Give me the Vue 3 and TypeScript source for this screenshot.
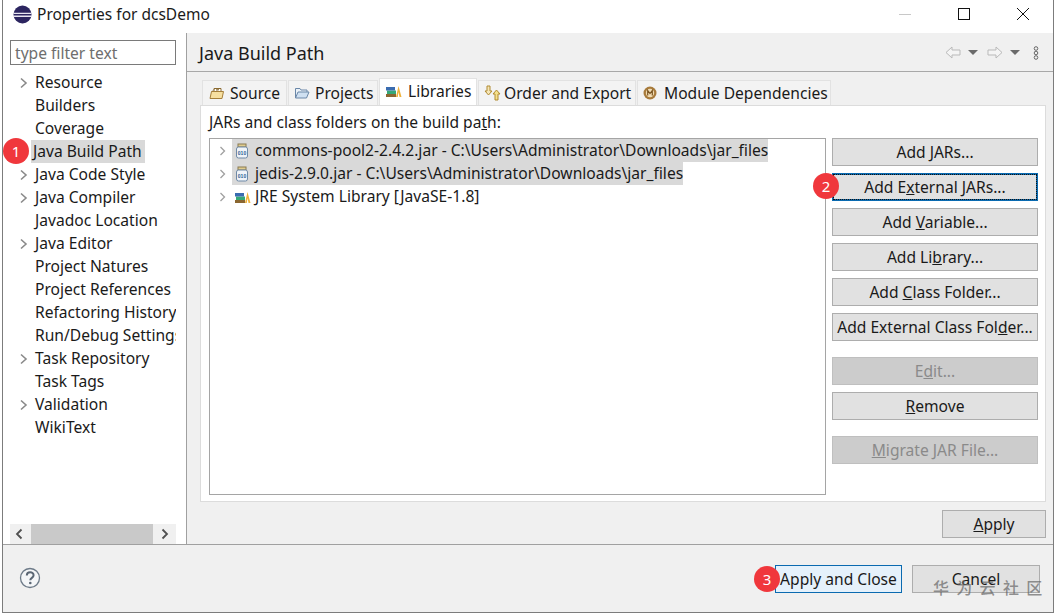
<script setup lang="ts">
interface TreeItem { label: string; arrow: boolean; selected?: boolean }
const tree: TreeItem[] = [
  { label: 'Resource', arrow: true },
  { label: 'Builders', arrow: false },
  { label: 'Coverage', arrow: false },
  { label: 'Java Build Path', arrow: false, selected: true },
  { label: 'Java Code Style', arrow: true },
  { label: 'Java Compiler', arrow: true },
  { label: 'Javadoc Location', arrow: false },
  { label: 'Java Editor', arrow: true },
  { label: 'Project Natures', arrow: false },
  { label: 'Project References', arrow: false },
  { label: 'Refactoring History', arrow: false },
  { label: 'Run/Debug Settings', arrow: false },
  { label: 'Task Repository', arrow: true },
  { label: 'Task Tags', arrow: false },
  { label: 'Validation', arrow: true },
  { label: 'WikiText', arrow: false }
]
</script>

<template>
  <div class="window">
    <header class="titlebar">
      <svg class="logo" width="19" height="19" viewBox="0 0 19 19">
        <circle cx="9.500" cy="9.500" r="9" fill="#2c2560" />
        <path d="M.8 7.800h17.400v1.300H.8zM.8 10.600h17.400v1.300H.8z" fill="#e9e6f2" />
      </svg>
      <span class="title">Properties for dcsDemo</span>
      <div class="winctl">
        <svg width="14" height="14" viewBox="0 0 14 14"><path d="M1 7.500h12" stroke="#c8c8c8" /></svg>
        <svg width="14" height="14" viewBox="0 0 14 14"><rect x="1.500" y="1.500" width="11" height="11" fill="none" stroke="#111" /></svg>
        <svg width="14" height="14" viewBox="0 0 14 14"><path d="M1 1l12 12M13 1L1 13" stroke="#111" /></svg>
      </div>
    </header>

    <div class="body">
      <aside class="side">
        <div class="filter">type filter text</div>
        <ul class="tree">
          <li v-for="t in tree" :key="t.label" class="node">
            <svg v-if="t.arrow" class="arrow" width="9" height="12" viewBox="0 0 9 12"><path d="M2 1.500L7 6l-5 4.500" fill="none" stroke="#8a8a8a" stroke-width="1.600" /></svg>
            <span v-else class="arrow" />
            <span class="nodelabel" :class="{ sel: t.selected }">{{ t.label }}</span>
          </li>
        </ul>
        <div class="hscroll">
          <svg width="8" height="12" viewBox="0 0 8 12"><path d="M6.500 1.500L2 6l4.500 4.500" fill="none" stroke="#505050" stroke-width="1.800" /></svg>
          <div class="thumb" />
          <svg width="8" height="12" viewBox="0 0 8 12"><path d="M1.500 1.500L6 6l-4.500 4.500" fill="none" stroke="#505050" stroke-width="1.800" /></svg>
        </div>
      </aside>

      <main class="main">
        <div class="mainhead">
          <h1 class="heading">Java Build Path</h1>
          <div class="nav">
            <svg width="16" height="13" viewBox="0 0 16 13"><path d="M7 1L1 6.500 7 12V9h8V4H7z" fill="#f4f4f4" stroke="#b9b9b9" /></svg>
            <i class="tri" />
            <svg width="16" height="13" viewBox="0 0 16 13"><path d="M9 1l6 5.500L9 12V9H1V4h8z" fill="#f4f4f4" stroke="#b9b9b9" /></svg>
            <i class="tri" />
            <svg class="dots" width="6" height="14" viewBox="0 0 6 14"><g fill="none" stroke="#666"><circle cx="3" cy="2.500" r="1.800" /><circle cx="3" cy="7" r="1.800" /><circle cx="3" cy="11.500" r="1.800" /></g></svg>
          </div>
        </div>

        <div class="tabsarea">
          <div class="tabs">
            <div class="tab t1">
              <svg width="16" height="14" viewBox="0 0 16 14"><path d="M5 5V2.500h7V5M7 3.800h3" fill="#fff" stroke="#8a6a30" /><path d="M1 12.500l1.500-7h12l-1.500 7z" fill="#f6dfa0" stroke="#a57f3a" /><path d="M3 5.500l3-3M7 5.500l3-3" stroke="#8a6a30" stroke-width=".6" /></svg>Source
            </div>
            <div class="tab t2">
              <svg width="16" height="14" viewBox="0 0 16 14"><path d="M1.500 12V2.500h4.500l1 1.500h6v2" fill="#eaf1f8" stroke="#6a87a8" /><path d="M1.500 12l2.500-6h11l-2.500 6z" fill="#cfe0f1" stroke="#6a87a8" /></svg>Projects
            </div>
            <div class="tab t3 active">
              <svg width="17" height="14" viewBox="0 0 17 14"><path d="M1 10h10v3H1z" fill="#8a6630" /><path d="M2 6.500h9V10H2z" fill="#35a877" /><path d="M1 3h9v3.500H1z" fill="#3a6cb0" /><path d="M11 13l2.500-11L16.500 13h-2l-1-5-.7 5z" fill="#eeb23a" /></svg>Libraries
            </div>
            <div class="tab t4">
              <svg width="18" height="16" viewBox="0 0 18 16"><path d="M4 1h3v5h2L5.500 10 2 6h2z" fill="#f5e6b8" stroke="#b08a30" /><path d="M12 15V9h-2l3.500-4L17 9h-2v6z" fill="#f5e08a" stroke="#b08a30" /></svg>Order and Export
            </div>
            <div class="tab t5">
              <svg width="14" height="14" viewBox="0 0 14 14"><circle cx="7" cy="7" r="6.500" fill="#a87b3c" /><circle cx="7" cy="7" r="4.200" fill="#f1dcb4" /><path d="M4.700 9.500v-5l2.300 3 2.300-3v5" fill="none" stroke="#7a5522" stroke-width="1.200" /></svg>Module Dependencies
            </div>
          </div>
          <section class="panel">
            <p class="lead">JARs and class folders on the build pa<u>t</u>h:</p>
            <div class="columns">
              <div class="list">
                <div class="row">
                  <svg class="arrow2" width="7" height="10" viewBox="0 0 7 10"><path d="M1.500 1L5.500 5l-4 4" fill="none" stroke="#a0a0a0" stroke-width="1.300" /></svg>
                  <span class="hl">
                    <svg class="ic" width="14" height="16" viewBox="0 0 14 16"><rect x="3" y="1" width="8" height="3" fill="#e0cc8e" stroke="#8a7a50" /><rect x="1.500" y="4" width="11" height="11" rx="2" fill="#f0f4f8" stroke="#6f8aa8" /><text x="7" y="11.500" font-size="5" font-weight="700" text-anchor="middle" fill="#2f5f96" font-family="Liberation Sans">010</text></svg>
                    <span class="rowtext">commons-pool2-2.4.2.jar - C:\Users\Administrator\Downloads\jar_files</span>
                  </span>
                </div>
                <div class="row">
                  <svg class="arrow2" width="7" height="10" viewBox="0 0 7 10"><path d="M1.500 1L5.500 5l-4 4" fill="none" stroke="#a0a0a0" stroke-width="1.300" /></svg>
                  <span class="hl">
                    <svg class="ic" width="14" height="16" viewBox="0 0 14 16"><rect x="3" y="1" width="8" height="3" fill="#e0cc8e" stroke="#8a7a50" /><rect x="1.500" y="4" width="11" height="11" rx="2" fill="#f0f4f8" stroke="#6f8aa8" /><text x="7" y="11.500" font-size="5" font-weight="700" text-anchor="middle" fill="#2f5f96" font-family="Liberation Sans">010</text></svg>
                    <span class="rowtext">jedis-2.9.0.jar - C:\Users\Administrator\Downloads\jar_files</span>
                  </span>
                </div>
                <div class="row">
                  <svg class="arrow2" width="7" height="10" viewBox="0 0 7 10"><path d="M1.500 1L5.500 5l-4 4" fill="none" stroke="#a0a0a0" stroke-width="1.300" /></svg>
                  <span class="hl plain">
                    <svg class="ic" width="17" height="14" viewBox="0 0 17 14"><path d="M1 10h10v3H1z" fill="#8a6630" /><path d="M2 6.500h9V10H2z" fill="#35a877" /><path d="M1 3h9v3.500H1z" fill="#3a6cb0" /><path d="M11 13l2.500-11L16.500 13h-2l-1-5-.7 5z" fill="#eeb23a" /></svg>
                    <span class="rowtext lib">JRE System Library [JavaSE-1.8]</span>
                  </span>
                </div>
              </div>
              <div class="btncol">
                <button class="btn">Add <u>J</u>ARs...</button>
                <button class="btn focus">Add E<u>x</u>ternal JARs...</button>
                <button class="btn">Add <u>V</u>ariable...</button>
                <button class="btn">Add Li<u>b</u>rary...</button>
                <button class="btn">Add <u>C</u>lass Folder...</button>
                <button class="btn">Add External Class Fol<u>d</u>er...</button>
                <button class="btn dis gap">E<u>d</u>it...</button>
                <button class="btn"><u>R</u>emove</button>
                <button class="btn dis gap"><u>M</u>igrate JAR File...</button>
              </div>
            </div>
          </section>
          <div class="applyrow"><button class="btn apply"><u>A</u>pply</button></div>
        </div>
      </main>
    </div>

    <footer class="footer">
      <svg class="help" width="22" height="22" viewBox="0 0 22 22"><circle cx="11" cy="11" r="9.500" fill="#f4f6f8" stroke="#6d7a88" stroke-width="1.300" /><path d="M7.800 8.500c0-4.300 6.800-4.300 6.800-.2 0 2.600-3.300 2.600-3.300 5" fill="none" stroke="#5a6674" stroke-width="2" /><circle cx="11.300" cy="16" r="1.300" fill="#5a6674" /></svg>
      <div class="footbtns">
        <button class="btn default">Apply and Close</button>
        <button class="btn cancel">Cancel</button>
      </div>
    </footer>

    <span class="badge b1">1</span>
    <span class="badge b2">2</span>
    <span class="badge b3">3</span>
    <span class="watermark">华为云社区</span>
  </div>
</template>

<style>
html, body { margin: 0; background: #fff; }
</style>

<style scoped>
.window {
  position: relative;
  box-sizing: border-box;
  width: 1052px;
  height: 613px;
  margin-left: 2px;
  border-left: 1px solid #7c7c7c;
  border-right: 1px solid #7c7c7c;
  border-bottom: 1px solid #7c7c7c;
  display: flex;
  flex-direction: column;
  font-family: "Noto Sans", "Noto Sans CJK SC", sans-serif;
  font-size: 15.6px;
  color: #1a1a1a;
  background: #fff;
  overflow: hidden;
}
.titlebar {
  height: 33px;
  flex: none;
  box-sizing: border-box;
  display: flex;
  align-items: center;
  padding: 0 0 5px 10px;
  gap: 5px;
}
.title { font-size: 15.5px; }
.winctl {
  margin-left: auto;
  display: flex;
  gap: 45px;
  padding-right: 23px;
}
.body { flex: 1; display: flex; min-height: 0; }
.side {
  width: 184px;
  flex: none;
  box-sizing: border-box;
  border-right: 1px solid #a0a0a0;
  padding: 7px 9px 0 7px;
  display: flex;
  flex-direction: column;
}
.filter {
  height: 25px;
  box-sizing: border-box;
  width: 166px;
  border: 1px solid #7a7a7a;
  padding-left: 4px;
  line-height: 25px;
  color: #6e6e6e;
  flex: none;
}
.tree { list-style: none; margin: 6px 0 0; padding: 0; flex: 1; width: 166px; white-space: nowrap; overflow: hidden; }
.node { height: 23px; display: flex; align-items: center; padding-left: 9px; }
.arrow { width: 9px; flex: none; display: block; margin-right: 5px; }
.nodelabel { padding: 0 2px; line-height: 23px; }
.sel { background: #d9d9d9; margin-left: -2px; padding-left: 2px; padding-right: 3px; }
.hscroll {
  height: 20px;
  width: 166px;
  flex: none;
  background: #f0f0f0;
  display: flex;
  align-items: center;
  justify-content: space-between;
  padding: 0 7px 0 5px;
  box-sizing: border-box;
  gap: 8px;
}
.thumb { flex: 1; height: 20px; background: #c9c9c9; }
.main { flex: 1; display: flex; flex-direction: column; background: #f0f0f0; min-width: 0; }
.mainhead {
  height: 39px;
  flex: none;
  box-sizing: border-box;
  border-bottom: 1px solid #a8a8a8;
  display: flex;
  align-items: center;
  justify-content: space-between;
  padding: 1px 14px 0 12px;
}
.heading { font-size: 18px; font-weight: 400; margin: 0; }
.nav { display: flex; align-items: center; gap: 7px; }
.tri { width: 0; height: 0; border: 5px solid transparent; border-top: 5px solid #6a6a6a; border-bottom: 0; margin-right: 2px; }
.dots { margin-left: 4px; }
.tabsarea { flex: 1; padding: 6px 7px 0 13px; display: flex; flex-direction: column; }
.tabs { height: 27px; display: flex; align-items: flex-end; padding-left: 2px; flex: none; }
.tab {
  height: 25px;
  box-sizing: border-box;
  background: #f3f3f3;
  border: 1px solid #e2e2e2;
  border-bottom: 0;
  display: flex;
  align-items: center;
  gap: 5px;
  padding-left: 5px;
  margin-right: 1px;
  white-space: nowrap;
}
.tab.active { height: 27px; background: #fff; padding-bottom: 2px; gap: 6px; }
.t1 { width: 85px; padding-left: 6px; }
.t2 { width: 90px; }
.t3 { width: 98px; }
.t4 { width: 158px; padding-left: 4px; gap: 3px; }
.t5 { width: 194px; gap: 7px; }
.panel { background: #fff; border: 1px solid #dcdcdc; height: 397px; box-sizing: border-box; padding: 0 7px 0 8px; flex: none; }
.lead { margin: 0; height: 32px; line-height: 33px; }
.columns { display: flex; justify-content: space-between; align-items: flex-start; }
.list {
  width: 617px;
  height: 357px;
  box-sizing: border-box;
  border: 1px solid #a5a5a5;
  white-space: nowrap;
}
.row { height: 23px; display: flex; align-items: center; padding-left: 9px; }
.arrow2 { margin-right: 6px; flex: none; }
.hl { background: #d9d9d9; display: flex; align-items: center; height: 23px; padding-left: 3px; }
.ic { flex: none; }
.rowtext { margin-left: 6px; margin-top: -1px; }
.rowtext.lib { margin-left: 4px; }
.plain { background: transparent; padding-left: 2px; }
.btncol { width: 206px; display: flex; flex-direction: column; gap: 7px; }
.btn {
  font: inherit;
  color: inherit;
  height: 28px;
  box-sizing: border-box;
  background: #e1e1e1;
  border: 1px solid #adadad;
  padding: 0;
  white-space: nowrap;
  flex: none;
}
.focus { border: 2px solid #0a6ab0; outline: 1px dotted #111; outline-offset: -2px; }
.dis { color: #8a8a8a; background: #cccccc; border-color: #bfbfbf; }
.gap { margin-top: 9px; }
.applyrow { display: flex; justify-content: flex-end; padding-top: 8px; }
.apply { width: 104px; }
.footer {
  height: 68px;
  flex: none;
  box-sizing: border-box;
  border-top: 1px solid #a0a0a0;
  background: #f0f0f0;
  display: flex;
  align-items: center;
  justify-content: space-between;
  padding: 0 13px 0 16px;
}
.help { margin-top: -2px; }
.footbtns { display: flex; gap: 10px; }
.default { width: 127px; background: #e5f1fb; border-color: #0a6ab0; }
.cancel { width: 128px; }
.badge {
  position: absolute;
  width: 26px;
  height: 26px;
  border-radius: 50%;
  background: #f0373c;
  color: #fff;
  font-size: 15px;
  line-height: 26px;
  text-align: center;
}
.b1 { left: 0; top: 138px; }
.b2 { left: 810px; top: 173px; }
.b3 { left: 751px; top: 566px; }
.watermark {
  position: absolute;
  left: 930px;
  top: 575px;
  font-size: 16px;
  font-weight: 500;
  letter-spacing: 7.300px;
  color: rgba(100, 100, 100, 0.7);
  white-space: nowrap;
}
</style>
